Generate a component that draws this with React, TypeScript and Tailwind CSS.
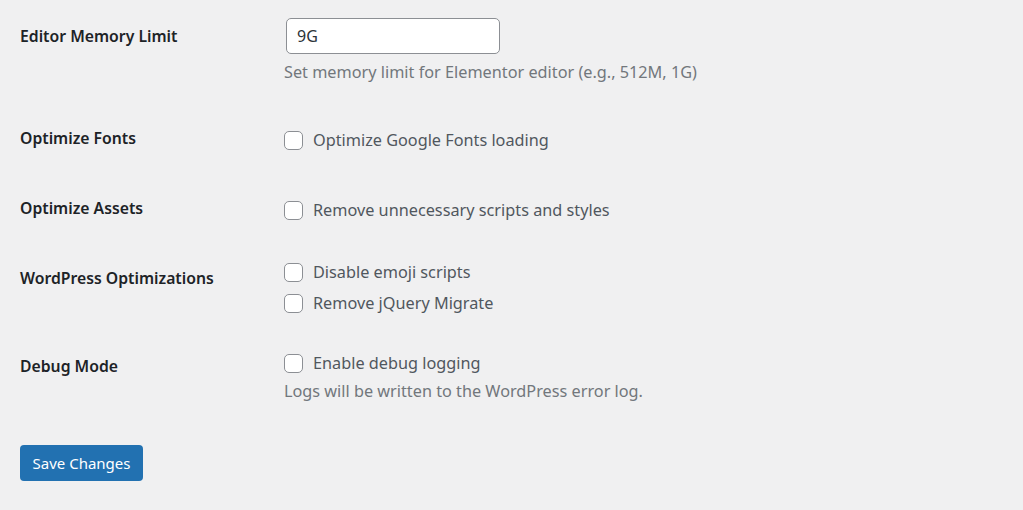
import React from "react";

const font = { fontFamily: '"Noto Sans", "Open Sans", sans-serif' };

function Check({ label }: { label: string }) {
  return (
    <label className="flex items-center h-[24px] gap-[10px] text-[16.25px] leading-[24px] text-[#50575e]">
      <span className="block w-[19px] h-[19px] rounded-[5px] border border-[#8c8f94] bg-white shrink-0" />
      <span>{label}</span>
    </label>
  );
}

function Label({ children, pt }: { children: React.ReactNode; pt: string }) {
  return (
    <div className={`w-[284px] shrink-0 pl-[20px] ${pt}`}>
      <div className="text-[15.75px] leading-[22px] font-semibold text-[#1d2327]">{children}</div>
    </div>
  );
}

export default function App() {
  return (
    <div className="w-[1023px] h-[510px] bg-[#f0f0f1] overflow-hidden" style={font}>
      <div className="flex h-[100px]">
        <Label pt="pt-[25px]">Editor Memory Limit</Label>
        <div className="pt-[18px]">
          <div className="ml-[2px] w-[214px] h-[36px] rounded-[5px] border border-[#8c8f94] bg-white flex items-center px-[10px] text-[16px] text-[#2c3338]">
            9G
          </div>
          <div className="mt-[6px] text-[16.25px] leading-[24px] text-[#72777c]">
            Set memory limit for Elementor editor (e.g., 512M, 1G)
          </div>
        </div>
      </div>
      <div className="flex h-[70px]">
        <Label pt="pt-[27px]">Optimize Fonts</Label>
        <div className="pt-[28px]">
          <Check label="Optimize Google Fonts loading" />
        </div>
      </div>
      <div className="flex h-[70px]">
        <Label pt="pt-[27px]">Optimize Assets</Label>
        <div className="pt-[28px]">
          <Check label="Remove unnecessary scripts and styles" />
        </div>
      </div>
      <div className="flex h-[88px]">
        <Label pt="pt-[27px]">WordPress Optimizations</Label>
        <div className="pt-[20px] flex flex-col gap-[7px]">
          <Check label="Disable emoji scripts" />
          <Check label="Remove jQuery Migrate" />
        </div>
      </div>
      <div className="flex h-[92px]">
        <Label pt="pt-[27px]">Debug Mode</Label>
        <div className="pt-[23px]">
          <Check label="Enable debug logging" />
          <div className="mt-[4px] text-[16.25px] leading-[24px] text-[#72777c]">
            Logs will be written to the WordPress error log.
          </div>
        </div>
      </div>
      <div className="pl-[20px] pt-[25px]">
        <button className="h-[36px] w-[123px] rounded-[4px] bg-[#2271b1] text-white text-[15px]">
          Save Changes
        </button>
      </div>
    </div>
  );
}
